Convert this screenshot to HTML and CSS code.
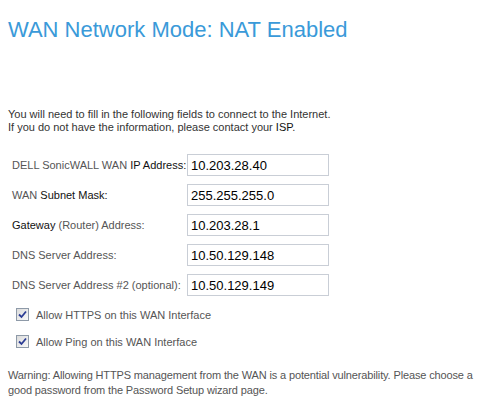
FILE: index.html
```html
<!DOCTYPE html>
<html lang="en">
<head>
    <meta charset="UTF-8">
    <title>WAN Network Mode</title>
    <link rel="stylesheet" href="styles.css">
</head>
<body>
    <div class="wizard-page">
        <h1>WAN Network Mode: NAT Enabled</h1>

        <p class="intro">
            You will need to fill in the following fields to connect to the Internet.<br>
            If you do not have the information, please contact your <span class="dark">ISP</span>.
        </p>

        <div class="fields">
            <div class="field-row">
                <label for="wan-ip">DELL SonicWALL WAN <span class="dark">IP Address:</span></label>
                <input type="text" id="wan-ip" value="10.203.28.40">
            </div>
            <div class="field-row">
                <label for="wan-mask">WAN <span class="dark">Subnet Mask:</span></label>
                <input type="text" id="wan-mask" value="255.255.255.0">
            </div>
            <div class="field-row">
                <label for="gateway"><span class="dark">Gateway</span> (Router) Address:</label>
                <input type="text" id="gateway" value="10.203.28.1">
            </div>
            <div class="field-row">
                <label for="dns1">DNS Server Address:</label>
                <input type="text" id="dns1" value="10.50.129.148">
            </div>
            <div class="field-row">
                <label for="dns2">DNS Server Address #2 (optional):</label>
                <input type="text" id="dns2" value="10.50.129.149">
            </div>
        </div>

        <div class="options">
            <label class="check-row">
                <input type="checkbox" checked>
                <span class="check-box">
                    <svg width="9" height="9" viewBox="0 0 9 9"><path d="M1 4.5 L3.5 7 L8 1.5" fill="none" stroke="#2b3c94" stroke-width="1.8"/></svg>
                </span>
                <span>Allow HTTPS on this WAN Interface</span>
            </label>
            <label class="check-row">
                <input type="checkbox" checked>
                <span class="check-box">
                    <svg width="9" height="9" viewBox="0 0 9 9"><path d="M1 4.5 L3.5 7 L8 1.5" fill="none" stroke="#2b3c94" stroke-width="1.8"/></svg>
                </span>
                <span>Allow Ping on this WAN Interface</span>
            </label>
        </div>

        <p class="warning">
            Warning: Allowing HTTPS management from the WAN is a potential vulnerability. Please choose a<br>
            good password from the Password Setup wizard page.
        </p>
    </div>
</body>
</html>
```

FILE: styles.css
```css
* {
    margin: 0;
    padding: 0;
    box-sizing: border-box;
}

body {
    background-color: #ffffff;
    font-family: 'Liberation Sans', Arial, sans-serif;
    font-size: 11px;
    color: #444444;
}

.wizard-page {
    padding: 17px 0 8px 8px;
}

h1 {
    font-size: 22px;
    font-weight: normal;
    line-height: 26px;
    color: #3a9ad9;
    margin-bottom: 65px;
}

.intro {
    line-height: 13px;
    color: #333333;
    margin-bottom: 20px;
}

.dark {
    color: #111111;
}

.fields {
    display: flex;
    flex-direction: column;
    gap: 8px;
    padding-left: 4px;
}

.field-row {
    display: flex;
    align-items: center;
    height: 22px;
}

.field-row label {
    width: 175px;
    color: #555555;
}

.field-row input {
    width: 142px;
    height: 22px;
    border: 1px solid #c9ced6;
    padding: 0 3px;
    font-family: 'Liberation Sans', Arial, sans-serif;
    font-size: 13px;
    color: #000000;
    background: #ffffff;
}

.options {
    display: flex;
    flex-direction: column;
    gap: 14px;
    margin-top: 12px;
    padding-left: 8px;
}

.check-row {
    display: flex;
    align-items: center;
    gap: 7px;
    height: 13px;
    color: #555555;
}

.check-row input {
    display: none;
}

.check-box {
    width: 13px;
    height: 13px;
    border: 1px solid #8e9aa8;
    background: linear-gradient(135deg, #dcdcdc, #f8f8f8);
    display: flex;
    align-items: center;
    justify-content: center;
}

.warning {
    margin-top: 20px;
    line-height: 15px;
    letter-spacing: -0.14px;
    color: #555555;
}
```
